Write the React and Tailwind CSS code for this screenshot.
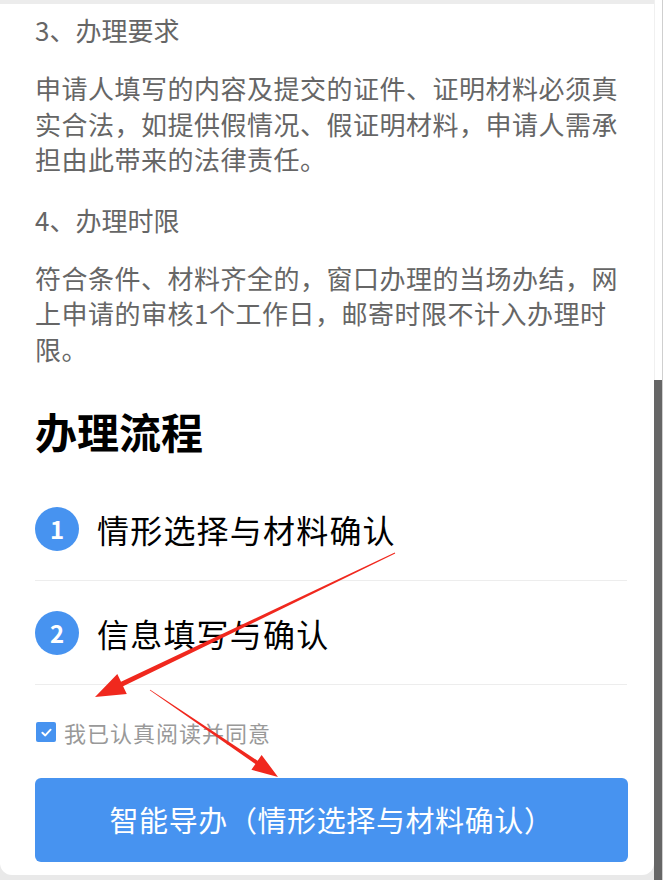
const font = { fontFamily: '"Noto Sans CJK SC", "Noto Sans", sans-serif' }

function arrowPoints(sx, sy, tx, ty, headLen, headHalf, tailW, neckW) {
    const dx = tx - sx
    const dy = ty - sy
    const len = Math.hypot(dx, dy)
    const ux = dx / len
    const uy = dy / len
    const nx = -uy
    const ny = ux
    const bx = tx - ux * headLen
    const by = ty - uy * headLen
    const pts = [
        [sx + nx * tailW, sy + ny * tailW],
        [bx + nx * neckW, by + ny * neckW],
        [bx + nx * headHalf, by + ny * headHalf],
        [tx, ty],
        [bx - nx * headHalf, by - ny * headHalf],
        [bx - nx * neckW, by - ny * neckW],
        [sx - nx * tailW, sy - ny * tailW],
    ]
    return pts.map((p) => p.map((v) => v.toFixed(1)).join(',')).join(' ')
}

function Step({ n, label }) {
    return (
        <div className="flex items-center h-[103px]">
            <div className="w-[44px] h-[44px] rounded-full bg-[#4793f0] flex items-center justify-center text-white text-[24px] font-bold shrink-0">
                {n}
            </div>
            <span className="ml-[18px] text-[32px] text-black leading-none tracking-[1.2px]">{label}</span>
        </div>
    )
}

export default function App() {
    return (
        <div className="relative w-[663px] h-[880px] bg-[#e9e9e9] overflow-hidden" style={font}>
            <div className="flex h-full">
                <div className="w-[654px] h-[875px] bg-white rounded-b-[12px] flex flex-col">
                    <div className="h-[4px] bg-[#ececec] shrink-0" />
                    <div className="pl-[35px] pr-[27px] pt-[8px] text-[#666]">
                        <p className="text-[26px] leading-[36px]">3、办理要求</p>
                        <p className="mt-[22px] text-[26px] leading-[35.5px] tracking-[0.5px]">
                            申请人填写的内容及提交的证件、证明材料必须真实合法，如提供假情况、假证明材料，申请人需承担由此带来的法律责任。
                        </p>
                        <p className="mt-[25px] text-[26px] leading-[36px]">4、办理时限</p>
                        <p className="mt-[22px] text-[26px] leading-[35.5px] tracking-[0.5px]">
                            符合条件、材料齐全的，窗口办理的当场办结，网上申请的审核1个工作日，邮寄时限不计入办理时限。
                        </p>
                        <h2 className="mt-[41px] text-[42px] leading-[48px] font-bold text-black">办理流程</h2>
                        <div className="mt-[22px]">
                            <Step n="1" label="情形选择与材料确认" />
                            <div className="h-px bg-[#ededed]" />
                            <Step n="2" label="信息填写与确认" />
                            <div className="h-px bg-[#ededed]" />
                        </div>
                        <label className="mt-[32px] flex items-center h-[30px]">
                            <span className="w-[20px] h-[20px] ml-px rounded-[2px] bg-[#4793f0] flex items-center justify-center">
                                <svg width="13" height="13" viewBox="0 0 12 12" fill="none">
                                    <path d="M2.2 6.2 L4.9 8.7 L9.8 3.4" stroke="white" strokeWidth="1.8" strokeLinecap="round" strokeLinejoin="round" />
                                </svg>
                            </span>
                            <span className="ml-[8px] text-[22px] tracking-[1px] text-[#999]">我已认真阅读并同意</span>
                        </label>
                        <button className="mt-[31px] w-[593px] h-[84px] rounded-[6px] bg-[#4793f0] text-white text-[29px] tracking-[0.6px] flex items-center justify-center">
                            智能导办（情形选择与材料确认）
                        </button>
                    </div>
                </div>
                <div className="w-[9px] flex flex-col bg-white border-r border-[#cfcfcf]">
                    <div className="h-[380px] shrink-0 border-l border-[#f0f0f0]" />
                    <div className="flex-1 bg-[#666]" />
                </div>
            </div>
            <svg className="absolute inset-0 pointer-events-none" width="663" height="880">
                <polygon points={arrowPoints(395, 553, 95, 697, 30, 11, 0.5, 2.5)} fill="#f0281e" />
                <polygon points={arrowPoints(150, 690, 278, 777, 26, 9, 0.4, 2)} fill="#f0281e" />
            </svg>
        </div>
    )
}
